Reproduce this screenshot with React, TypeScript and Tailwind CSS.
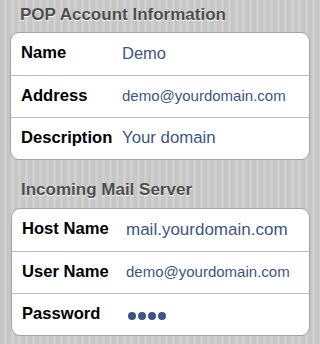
import React from "react";

type Row = { label: string; value: string; valueClass: string; dots?: boolean };

const Card = ({ rows, labelW, mx }: { rows: Row[]; labelW: string; mx: string }) => (
  <div className={`${mx} rounded-[9px] border border-[#a3a3a3] bg-white overflow-hidden`}>
    {rows.map((r, i) => (
      <div
        key={r.label}
        className={`flex items-center h-[42px] pl-[10px] pb-[1px] ${i > 0 ? "border-t border-[#bdbdbd]" : ""}`}
      >
        <div className={`${labelW} shrink-0 font-bold text-[16.6px] text-black`}>{r.label}</div>
        {r.dots ? (
          <div className="flex gap-[2px] items-center pt-[3px] ml-[2px]">
            {[0, 1, 2, 3].map((d) => (
              <span key={d} className="block w-[8px] h-[8px] rounded-full bg-[#3a5686]" />
            ))}
          </div>
        ) : (
          <div className={`${r.valueClass} text-[#3a5686]`}>{r.value}</div>
        )}
      </div>
    ))}
  </div>
);

export default function App() {
  return (
    <div
      className="w-[320px] h-[344px] overflow-hidden bg-[repeating-linear-gradient(90deg,#c6c6c6_0px,#c6c6c6_4px,#d0d0d0_4px,#d0d0d0_7px)]"
      style={{ fontFamily: '"Liberation Sans", Arial, sans-serif' }}
    >
      <div className="h-[32px] flex items-center pl-[20px] pb-[3px] font-bold text-[17px] text-[#4d4d4d] [text-shadow:0_1px_0_#ffffff]">
        POP Account Information
      </div>
      <Card
        mx="ml-[10px] mr-[10px]"
        labelW="w-[101px]"
        rows={[
          { label: "Name", value: "Demo", valueClass: "text-[16.5px]" },
          { label: "Address", value: "demo@yourdomain.com", valueClass: "text-[15px]" },
          { label: "Description", value: "Your domain", valueClass: "text-[16.8px]" },
        ]}
      />
      <div className="h-[48px] flex items-end pl-[21px] pb-[6px] font-bold text-[17px] text-[#4d4d4d] [text-shadow:0_1px_0_#ffffff]">
        Incoming Mail Server
      </div>
      <Card
        mx="ml-[11px] mr-[10px]"
        labelW="w-[104px]"
        rows={[
          { label: "Host Name", value: "mail.yourdomain.com", valueClass: "text-[17px]" },
          { label: "User Name", value: "demo@yourdomain.com", valueClass: "text-[15px]" },
          { label: "Password", value: "", valueClass: "", dots: true },
        ]}
      />
    </div>
  );
}
